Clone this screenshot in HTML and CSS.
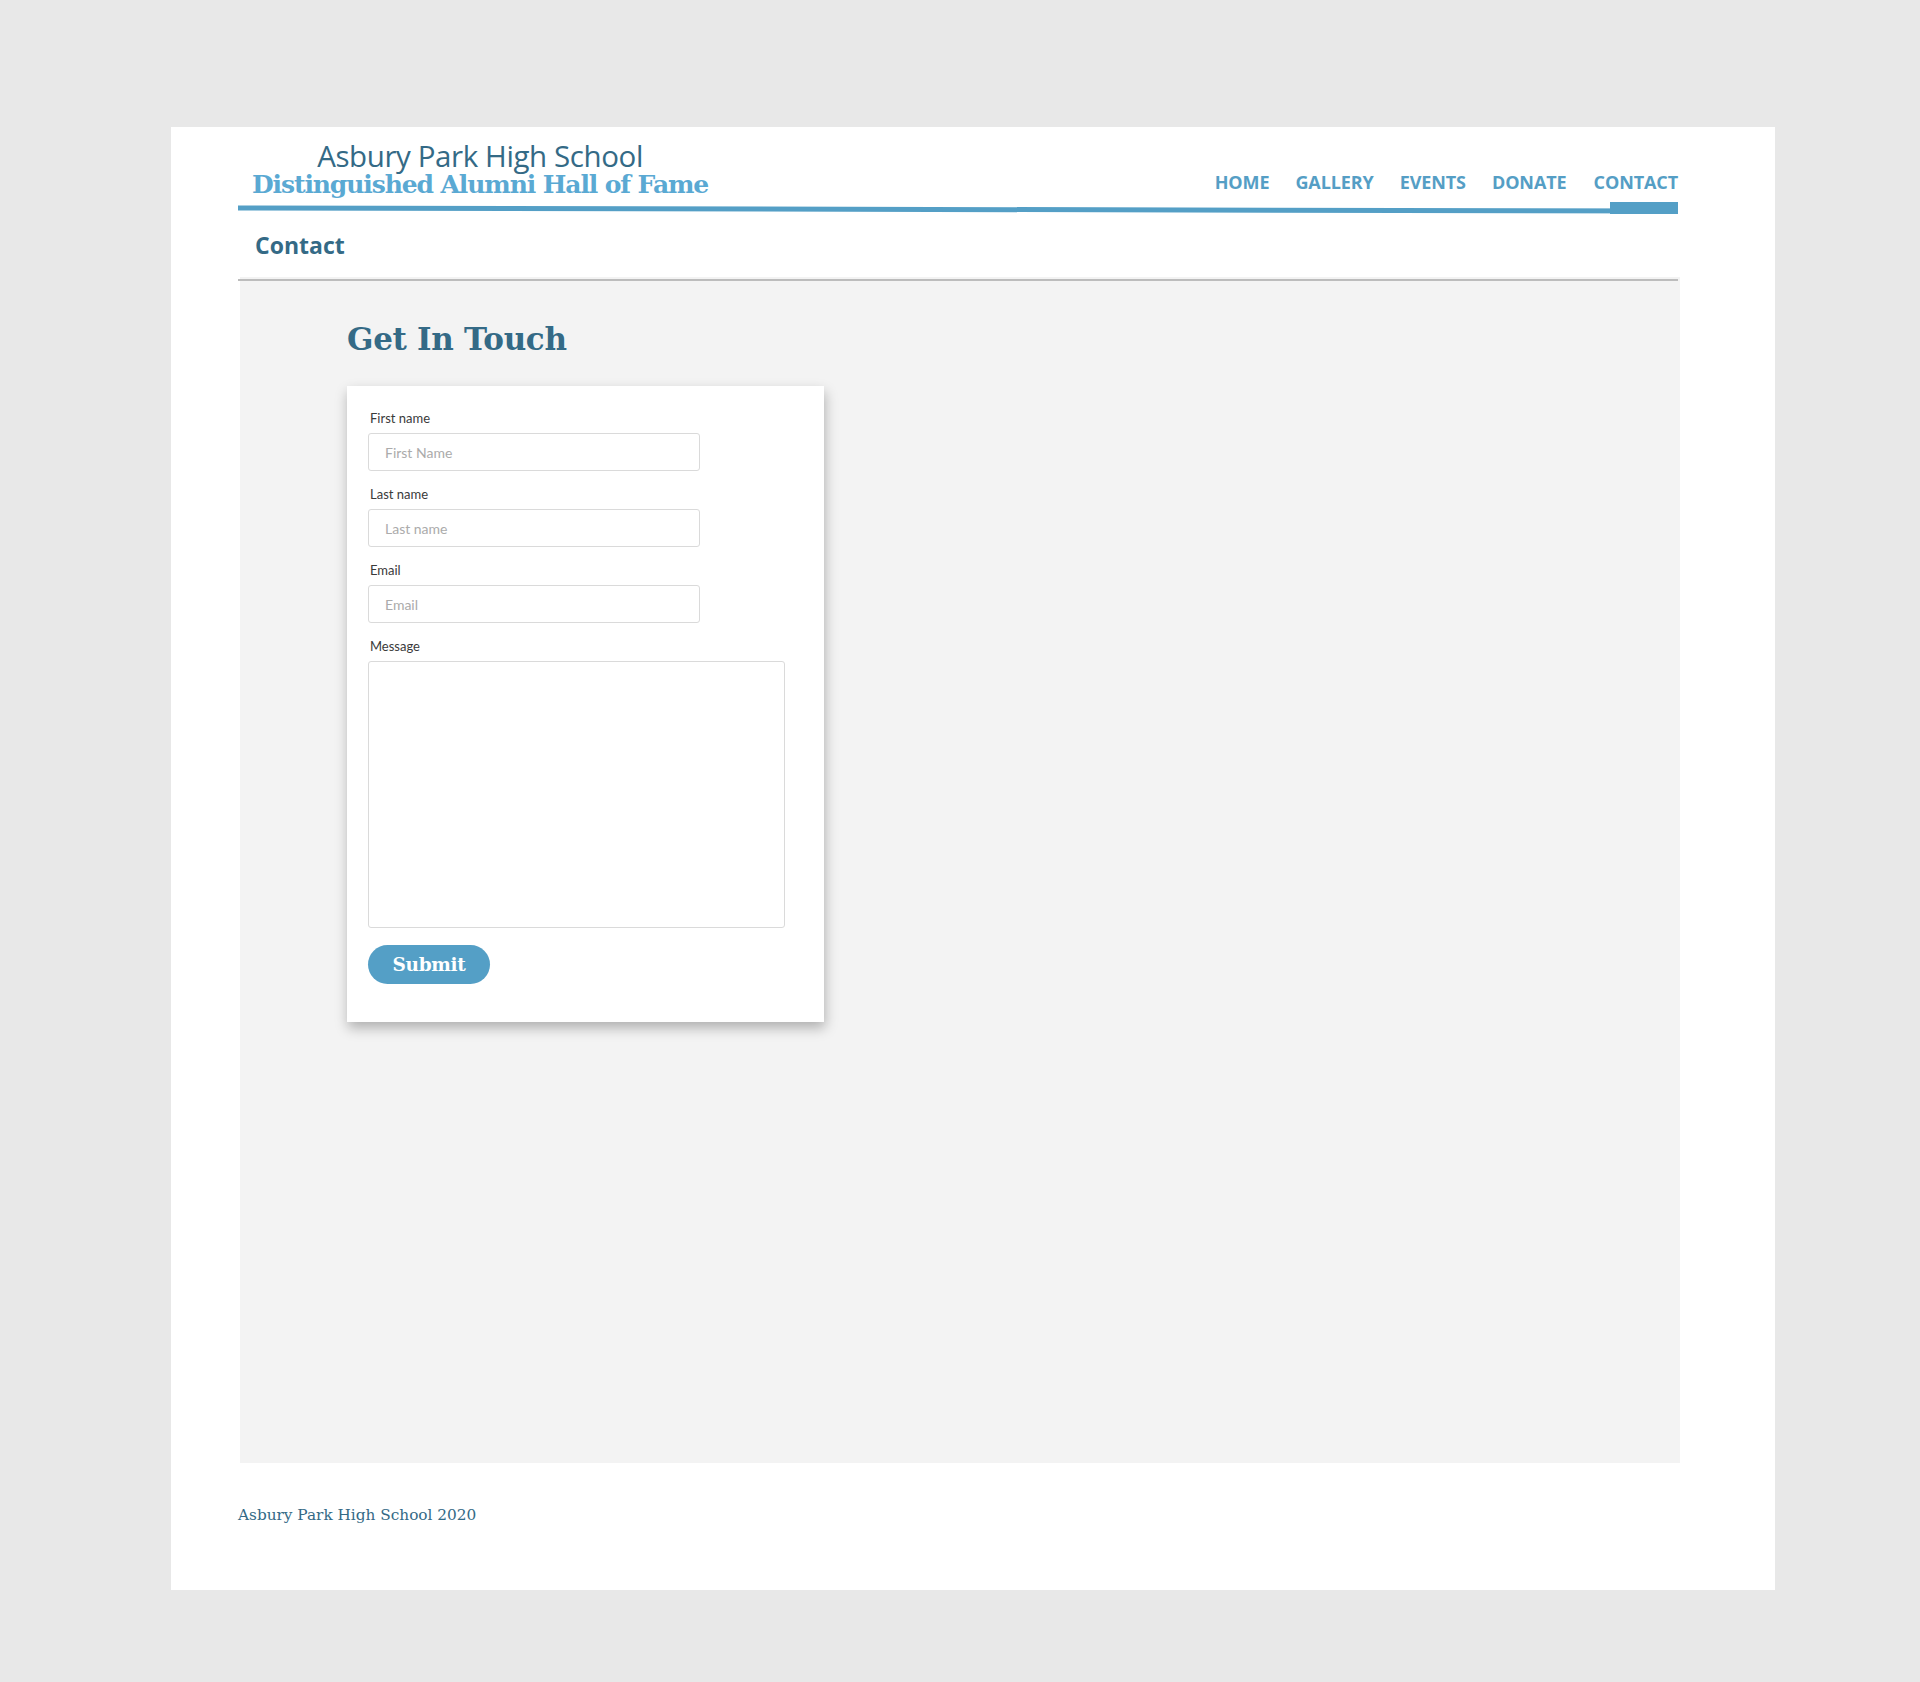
FILE: index.html
```html
<!DOCTYPE html>
<html lang="en">
<head>
<meta charset="utf-8">
<title>Contact - Asbury Park High School Distinguished Alumni Hall of Fame</title>
<link rel="stylesheet" href="styles.css">
</head>
<body>
  <div class="page">
    <header class="site-header">
      <div class="brand">
        <div class="brand-school">Asbury Park High School</div>
        <div class="brand-hof">Distinguished Alumni Hall of Fame</div>
      </div>
      <nav class="nav">
        <a href="#" class="nav-link">HOME</a>
        <a href="#" class="nav-link">GALLERY</a>
        <a href="#" class="nav-link">EVENTS</a>
        <a href="#" class="nav-link">DONATE</a>
        <a href="#" class="nav-link nav-link-active">CONTACT</a>
      </nav>
    </header>
    <div class="rule-wrap"><div class="rule"></div></div>
    <h1 class="page-title">Contact</h1>
    <main class="content">
      <div class="content-rule"></div>
      <h2 class="section-title">Get In Touch</h2>
      <form class="card">
        <div class="field">
          <label class="field-label" for="fname">First name</label>
          <input class="field-input" id="fname" type="text" placeholder="First Name">
        </div>
        <div class="field">
          <label class="field-label" for="lname">Last name</label>
          <input class="field-input" id="lname" type="text" placeholder="Last name">
        </div>
        <div class="field">
          <label class="field-label" for="email">Email</label>
          <input class="field-input" id="email" type="text" placeholder="Email">
        </div>
        <div class="field">
          <label class="field-label" for="msg">Message</label>
          <textarea class="field-textarea" id="msg"></textarea>
        </div>
        <button type="button" class="submit">Submit</button>
      </form>
    </main>
    <footer class="footer">Asbury Park High School 2020</footer>
  </div>
</body>
</html>
```
FILE: styles.css
```css
* { box-sizing: border-box; }

html, body {
  margin: 0;
  padding: 0;
  background: #e8e8e8;
}

body {
  height: 1682px;
  padding-top: 127px;
  font-family: "Open Sans", "Liberation Sans", sans-serif;
}

.page {
  margin-left: 171px;
  width: 1604px;
  height: 1463px;
  background: #ffffff;
  padding: 0 97px 0 67px;
}

.site-header {
  display: flex;
  justify-content: space-between;
  align-items: flex-end;
  padding: 14px 0 10px 14px;
}

.brand {
  display: flex;
  flex-direction: column;
  align-items: center;
}

.brand-school {
  font-family: "Open Sans", sans-serif;
  font-weight: 400;
  font-size: 29.5px;
  line-height: 30px;
  color: #346a86;
  letter-spacing: -0.4px;
}

.brand-hof {
  padding-top: 1px;
  font-family: "DejaVu Serif", serif;
  font-weight: 700;
  font-size: 25px;
  line-height: 25px;
  color: #5aa9d3;
  letter-spacing: -1.1px;
}

.nav {
  display: flex;
  gap: 26px;
  margin-bottom: 5px;
}

.nav-link {
  font-family: "Open Sans", sans-serif;
  font-weight: 700;
  font-size: 18px;
  line-height: 20px;
  color: #559ec5;
  text-decoration: none;
  letter-spacing: -0.1px;
}

.nav-link-active {
  margin-left: 1px;
}

.rule-wrap {
  position: relative;
  height: 5px;
}

.rule {
  height: 5px;
  background: #549fc6;
  transform: rotate(0.12deg);
}

.rule-wrap::after {
  content: "";
  position: absolute;
  right: 0;
  top: -5px;
  width: 68px;
  height: 12px;
  background: #549fc6;
}

.page-title {
  margin: 18px 0 17px;
  padding-left: 17px;
  font-family: "Open Sans", sans-serif;
  font-weight: 700;
  font-size: 23px;
  line-height: 30px;
  color: #346a86;
}

.content {
  margin-left: 2px;
  width: 1440px;
  height: 1186px;
  background: #f3f3f3;
  padding: 2px 0 0 107px;
}

.content-rule {
  margin-left: -109px;
  width: 1440px;
  height: 2px;
  background: #bcbcbc;
}

.section-title {
  margin: 38px 0 27px;
  font-family: "DejaVu Serif", serif;
  font-weight: 700;
  font-size: 31px;
  line-height: 40px;
  color: #346a86;
  letter-spacing: -0.3px;
}

.card {
  width: 477px;
  background: #ffffff;
  padding: 24px 21px 38px;
  box-shadow: 1px 6px 12px rgba(0, 0, 0, 0.28);
}

.field {
  margin-bottom: 15px;
}

.field-label {
  display: block;
  margin: 0 0 7px 2px;
  font-family: Lato, sans-serif;
  font-size: 13px;
  line-height: 16px;
  color: #3a3a3a;
}

.field-input {
  display: block;
  width: 332px;
  height: 38px;
  border: 1px solid #dadada;
  border-radius: 3px;
  padding: 0 16px;
  font-family: Lato, sans-serif;
  font-size: 14px;
  color: #333;
  background: #fff;
  outline: none;
}

.field-input::placeholder {
  color: #ababab;
}

.field-textarea {
  display: block;
  width: 417px;
  height: 267px;
  border: 1px solid #dadada;
  border-radius: 3px;
  resize: none;
  font-family: Lato, sans-serif;
  background: #fff;
  outline: none;
}

.field:last-of-type {
  margin-bottom: 17px;
}

.submit {
  display: block;
  width: 122px;
  height: 39px;
  border: none;
  border-radius: 20px;
  background: #549fc6;
  color: #ffffff;
  font-family: "DejaVu Serif", serif;
  font-weight: 700;
  font-size: 18.5px;
  padding: 0;
  letter-spacing: -0.3px;
}

.footer {
  margin-top: 42px;
  font-family: "DejaVu Serif", serif;
  font-size: 15.3px;
  line-height: 20px;
  color: #346a86;
}
```
